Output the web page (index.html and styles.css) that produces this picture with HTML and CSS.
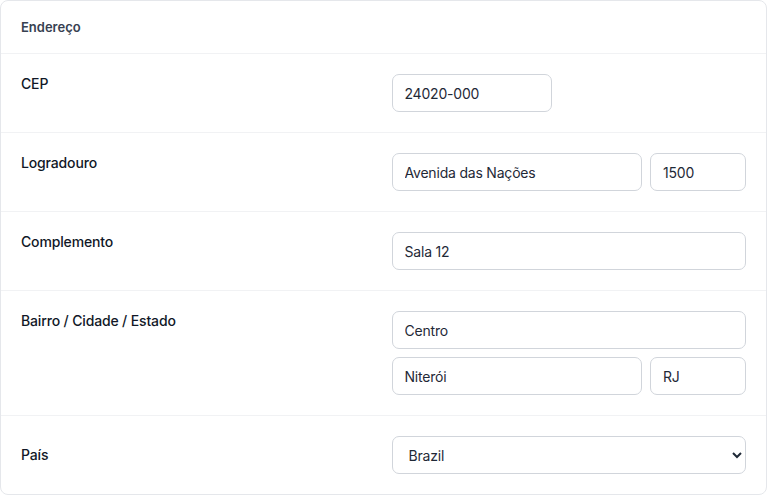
FILE: index.html
```html
<!DOCTYPE html>
<html lang="pt-BR">
<head>
<meta charset="utf-8">
<title>Endereço</title>
<link rel="stylesheet" href="styles.css">
</head>
<body>
<section class="card">
  <header class="card-head">Endereço</header>
  <div class="row">
    <label class="label" for="cep">CEP</label>
    <div class="fields">
      <input id="cep" class="input input-cep" type="text" value="24020-000">
    </div>
  </div>
  <div class="row">
    <label class="label" for="rua">Logradouro</label>
    <div class="fields">
      <div class="pair">
        <input id="rua" class="input" type="text" value="Avenida das Nações">
        <input class="input" type="text" value="1500">
      </div>
    </div>
  </div>
  <div class="row">
    <label class="label" for="comp">Complemento</label>
    <div class="fields">
      <input id="comp" class="input" type="text" value="Sala 12">
    </div>
  </div>
  <div class="row">
    <label class="label" for="bairro">Bairro / Cidade / Estado</label>
    <div class="fields stack">
      <input id="bairro" class="input" type="text" value="Centro">
      <div class="pair">
        <input class="input" type="text" value="Niterói">
        <input class="input" type="text" value="RJ">
      </div>
    </div>
  </div>
  <div class="row row-center">
    <label class="label" for="pais">País</label>
    <div class="fields">
      <select id="pais" class="input select">
        <option>Brazil</option>
      </select>
    </div>
  </div>
</section>
</body>
</html>
```
FILE: styles.css
```css
* { box-sizing: border-box; }
html, body { margin: 0; padding: 0; background: #ffffff; }
body {
  font-family: Inter, "Noto Sans", "Liberation Sans", sans-serif;
  font-size: 14px;
  color: #111827;
}
.card {
  width: 767px;
  border: 1px solid #e5e7eb;
  border-radius: 8px;
  background: #fff;
  overflow: hidden;
}
.card-head {
  height: 53px;
  padding: 0 20px;
  display: flex;
  align-items: center;
  font-size: 13px;
  font-weight: 600;
  color: #374151;
  border-bottom: 1px solid #f1f2f4;
}
.row {
  display: grid;
  grid-template-columns: 1fr 1fr;
  column-gap: 16px;
  padding: 20px;
  border-bottom: 1px solid #f1f2f4;
}
.row:last-child { border-bottom: 0; }
.row-center { align-items: center; }
.label {
  font-size: 14px;
  font-weight: 500;
  line-height: 20px;
  letter-spacing: -0.15px;
  color: #111827;
}
.fields { display: flex; flex-direction: column; }
.stack { gap: 8px; }
.pair {
  display: grid;
  grid-template-columns: 1fr 96px;
  gap: 8px;
}
.input {
  height: 38px;
  width: 100%;
  padding: 0 12px;
  border: 1px solid #d1d5db;
  border-radius: 7px;
  background: #fff;
  font-family: inherit;
  font-size: 14px;
  letter-spacing: -0.2px;
  color: #1f2937;
  outline: none;
}
.input-cep { width: 160px; }
.select { padding: 0 8px 0 12px; }
```
